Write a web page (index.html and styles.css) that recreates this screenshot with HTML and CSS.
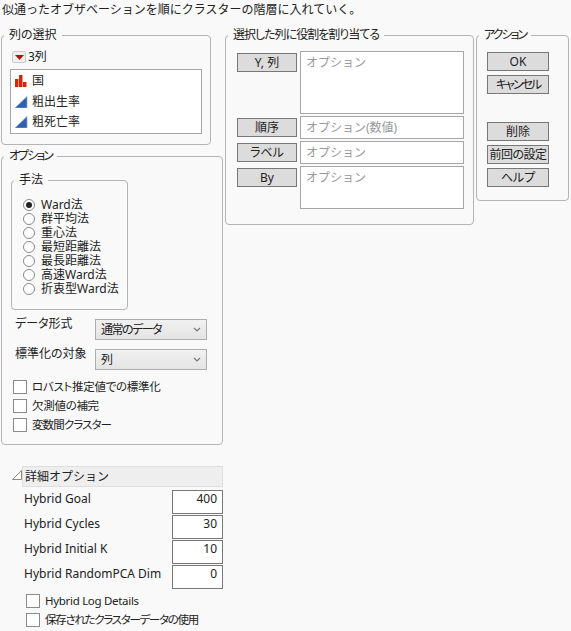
FILE: index.html
```html
<!DOCTYPE html>
<html lang="ja">
<head>
<meta charset="utf-8">
<title>階層型クラスター分析</title>
<link rel="stylesheet" href="styles.css">
</head>
<body>
<p class="intro">似通ったオブザベーションを順にクラスターの階層に入れていく。</p>
<div class="top">
  <div class="left">
    <fieldset class="group cols">
      <legend>列の選択</legend>
      <div class="count">
        <span class="menu"><svg width="9" height="5" viewBox="0 0 9 5"><path d="M0 0h9L4.500 5z" fill="#b01010"/></svg></span>
        <span>3列</span>
      </div>
      <ul class="collist">
        <li><svg class="ic" width="13" height="12" viewBox="0 0 13 12"><path d="M0 4h3.500v8H0zM4 0h3.500v12H4zM8 7h3.500v5H8z" fill="#cc2a0c"/></svg>国</li>
        <li><svg class="ic" width="13" height="12" viewBox="0 0 13 12"><path d="M0 12L12 .500V12z" fill="#2f62ad" stroke="#86a5d6" stroke-width=".700"/></svg>粗出生率</li>
        <li><svg class="ic" width="13" height="12" viewBox="0 0 13 12"><path d="M0 12L12 .500V12z" fill="#2f62ad" stroke="#86a5d6" stroke-width=".700"/></svg>粗死亡率</li>
      </ul>
    </fieldset>
    <fieldset class="group opts">
      <legend class="kana">オプション</legend>
      <fieldset class="group method">
        <legend>手法</legend>
        <div class="radio on"><i></i>Ward法</div>
        <div class="radio"><i></i>群平均法</div>
        <div class="radio"><i></i>重心法</div>
        <div class="radio"><i></i>最短距離法</div>
        <div class="radio"><i></i>最長距離法</div>
        <div class="radio"><i></i>高速Ward法</div>
        <div class="radio"><i></i>折衷型Ward法</div>
      </fieldset>
      <div class="field"><span>データ形式</span><div class="select"><em>通常のデータ</em><svg width="8" height="5" viewBox="0 0 8 5"><path d="M1 1l3 3 3-3" fill="none" stroke="#777" stroke-width="1.200"/></svg></div></div>
      <div class="field"><span>標準化の対象</span><div class="select"><em>列</em><svg width="8" height="5" viewBox="0 0 8 5"><path d="M1 1l3 3 3-3" fill="none" stroke="#777" stroke-width="1.200"/></svg></div></div>
      <div class="checks">
        <div class="check"><i></i>ロバスト推定値での標準化</div>
        <div class="check"><i></i>欠測値の補完</div>
        <div class="check tight"><i></i>変数間クラスター</div>
      </div>
    </fieldset>
  </div>
  <fieldset class="group roles">
    <legend class="soft">選択した列に役割を割り当てる</legend>
    <div class="role"><button>Y, 列</button><div class="slot tall">オプション</div></div>
    <div class="role"><button>順序</button><div class="slot">オプション(数値)</div></div>
    <div class="role"><button>ラベル</button><div class="slot">オプション</div></div>
    <div class="role"><button>By</button><div class="slot mid">オプション</div></div>
  </fieldset>
  <fieldset class="group actions">
    <legend class="kana">アクション</legend>
    <button>OK</button>
    <button class="kana">キャンセル</button>
    <button class="gap">削除</button>
    <button class="fit">前回の設定</button>
    <button>ヘルプ</button>
  </fieldset>
</div>
<section class="detail">
  <div class="dhead"><svg width="10" height="10" viewBox="0 0 10 10"><path d="M.500 9.500h9v-9z" fill="#fff" stroke="#888"/></svg><h2>詳細オプション</h2></div>
  <div class="nums">
    <div class="num"><span>Hybrid Goal</span><b>400</b></div>
    <div class="num"><span>Hybrid Cycles</span><b>30</b></div>
    <div class="num"><span>Hybrid Initial K</span><b>10</b></div>
    <div class="num"><span>Hybrid RandomPCA Dim</span><b>0</b></div>
  </div>
  <div class="check"><i></i>Hybrid Log Details</div>
  <div class="check long"><i></i>保存されたクラスターデータの使用</div>
</section>
</body>
</html>
```
FILE: styles.css
```css
* { box-sizing: border-box; }
html, body { margin: 0; padding: 0; }
body {
  position: relative;
  width: 571px; height: 631px; overflow: hidden;
  background: #f9f9f9; color: #222;
  font: 12px/14px "Noto Sans", "Noto Sans CJK JP", sans-serif;
}
.intro { margin: 0; padding: 3px 0 0 2px; height: 27px; }
.top { display: flex; align-items: flex-start; }
.group {
  --pad: 8px;
  margin: 0; padding: 0 0 0 var(--pad); min-width: 0;
  border: 1px solid #b4b4b4; border-radius: 4px;
}
.group legend {
  margin-left: calc(2px - var(--pad)); padding: 0 5px 0 5px;
  line-height: 16px; font-size: 12px; font-feature-settings: "palt";
}
.group legend.kana { letter-spacing: -2px; }
.group legend.soft { letter-spacing: -1px; }
.left { width: 225px; padding-left: 1px; }

.cols { width: 210px; height: 118px; padding-top: 6px; }
.count { display: flex; align-items: center; gap: 2px; height: 16px; margin-left: 2px; }
.menu {
  width: 14px; height: 12px; border: 1px solid #ccc; border-radius: 2px; background: #eee;
  display: flex; align-items: center; justify-content: center;
}
.collist {
  list-style: none; margin: 4px 0 0; padding: 1px 0 0 4px;
  width: 192px; height: 65px; background: #fff; border: 1px solid #a6a6a6;
}
.collist li { display: flex; align-items: center; gap: 4px; height: 20.500px; }
.ic { flex: none; }

.opts { --pad: 9px; width: 222px; height: 297px; margin-top: 3px; padding-top: 8px; }
.method { --pad: 11px; width: 117px; height: 138px; padding-top: 10px; }
.radio { display: flex; align-items: center; height: 14px; gap: 6px; font-feature-settings: "palt"; }
.radio i {
  width: 12px; height: 12px; border: 1px solid #8a8a8a; border-radius: 50%; background: #fff;
  display: flex; align-items: center; justify-content: center; flex: none;
}
.radio.on i::after { content: ""; width: 6px; height: 6px; border-radius: 50%; background: #222; }

.field { display: flex; margin: 9px 0 0 4px; height: 21px; }
.field span { width: 80px; margin-top: -2px; line-height: 13px; font-feature-settings: "palt"; }
.select {
  width: 112px; height: 21px; padding: 0 5px 0 5px;
  border: 1px solid #adadad;
  background: linear-gradient(#f1f1f1, #e4e4e4);
  display: flex; align-items: center; justify-content: space-between;
  font-feature-settings: "palt";
}
.select em { font-style: normal; letter-spacing: -1.500px; }
.checks { margin: 7px 0 0 2px; }
.check {
  display: flex; align-items: center; gap: 5px; height: 19px;
  white-space: nowrap; font-size: 11.500px; letter-spacing: -.3px;
  font-feature-settings: "palt";
}
.check.tight { letter-spacing: -.9px; }
.check.long { letter-spacing: -1.300px; }
.check i { width: 14px; height: 14px; background: #fff; border: 1px solid #8a8a8a; flex: none; }

button {
  display: block; margin: 0; padding: 0; height: 19px;
  border: 1px solid #777; border-radius: 0; background: #dcdcdc; color: #222;
  font: 12px/14px "Noto Sans", "Noto Sans CJK JP", sans-serif;
  font-feature-settings: "palt";
}
button.kana { letter-spacing: -2px; }
button.fit { letter-spacing: -.5px; }
.roles { --pad: 11px; width: 249px; height: 198px; padding-top: 8px; margin-right: 2px; }
.role { display: flex; gap: 3px; margin-bottom: 2px; }
.role button { width: 60px; margin-top: 2px; flex: none; }
.slot {
  width: 164px; height: 23px; padding: 4px 0 0 5px;
  background: #fff; border: 1px solid #a6a6a6; color: #999;
}
.slot.tall { height: 63px; }
.slot.mid { height: 43px; }

.actions { --pad: 10px; width: 93px; height: 174px; padding-top: 9px; }
.actions button { width: 62px; margin-bottom: 4px; }
.actions button.gap { margin-top: 28px; }

.detail { position: absolute; left: 0; top: 466px; width: 223px; }
.dhead { display: flex; align-items: flex-start; padding-left: 12px; height: 21px; }
.dhead svg { margin-top: 4px; flex: none; }
.dhead h2 {
  margin: 0; flex: 1; height: 21px; padding: 2px 0 0 2px;
  font-size: 12px; font-weight: 400; line-height: 16px;
  background: #eeeeee; border: 1px solid #dedede;
}
.nums { margin-top: 3px; }
.num { display: flex; justify-content: space-between; padding-left: 24px; height: 25px; }
.num span { padding-top: 2px; }
.num b {
  width: 51px; height: 24px; padding: 1px 5px 0 0; text-align: right; font-weight: 400;
  background: #fff; border: 1px solid #777;
}
.detail .check { margin-left: 26px; }
.nums + .check { margin-top: 1px; }
```
